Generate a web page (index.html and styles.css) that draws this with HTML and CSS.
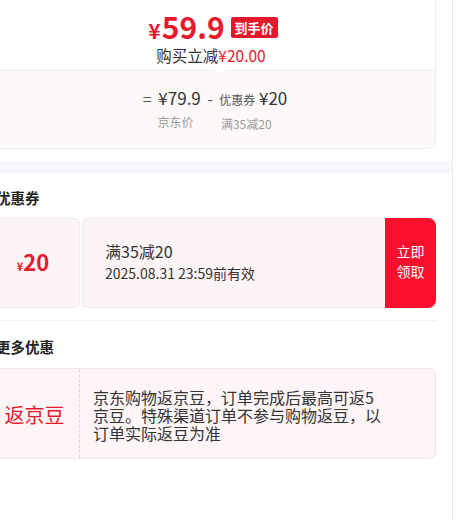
FILE: index.html
```html
<!DOCTYPE html>
<html lang="zh-CN">
<head>
<meta charset="utf-8">
<link rel="stylesheet" href="styles.css">
</head>
<body>
<div class="page">
  <div class="panel">
    <div class="inner">
      <div class="price-card">
        <div class="pc-top">
          <div class="final"><span class="yen">¥</span><span class="num">59.9</span><span class="badge">到手价</span></div>
          <div class="save">购买立减<span class="red">¥20.00</span></div>
        </div>
        <div class="pc-bottom">
          <span class="op">=</span>
          <div class="col">
            <div class="val">¥79.9</div>
            <div class="lbl">京东价</div>
          </div>
          <span class="op">-</span>
          <div class="col">
            <div class="val"><span class="vsm">优惠券</span> ¥20</div>
            <div class="lbl">满35减20</div>
          </div>
        </div>
      </div>
      <div class="band"></div>
      <section class="sec sec-coupon">
        <h3 class="title">优惠券</h3>
        <div class="coupon">
          <div class="stub"><span class="cy">¥</span><span class="camt">20</span></div>
          <div class="cmain">
            <div class="cname">满35减20</div>
            <div class="cdate">2025.08.31 23:59前有效</div>
          </div>
          <div class="cbtn">立即<br>领取</div>
        </div>
      </section>
      <section class="sec sec-more">
        <h3 class="title">更多优惠</h3>
        <div class="bean">
          <div class="bean-tag">返京豆</div>
          <div class="bean-text">京东购物返京豆，订单完成后最高可返5京豆。特殊渠道订单不参与购物返豆，以订单实际返豆为准</div>
        </div>
      </section>
    </div>
  </div>
  <div class="rail"></div>
</div>
</body>
</html>
```
FILE: styles.css
```css
* { box-sizing: border-box; }
html, body { margin: 0; padding: 0; background: #fff; }
body {
  font-family: "Noto Sans CJK SC", "Noto Sans", sans-serif;
  color: #333;
  width: 458px;
  height: 520px;
  overflow: hidden;
}
.page { display: flex; height: 520px; }
.panel {
  width: 453px;
  height: 520px;
  overflow: hidden;
  border-right: 1px solid #e9e9ec;
}
.rail { flex: 1; background: #fff; }
.inner {
  width: 482px;
  margin-left: -30px;
}
.price-card {
  margin: -8px 16px 0 16px;
  border: 1px solid #ececec;
  border-radius: 8px;
  overflow: hidden;
  position: relative;
}
.pc-top {
  height: 78px;
  padding-top: 15px;
  display: flex;
  flex-direction: column;
  align-items: center;
  background: #fff;
  border-bottom: 1px solid #f3eded;
  position: relative;
}
.pc-top::after {
  content: "";
  position: absolute;
  left: 228px;
  bottom: -1px;
  width: 0;
  height: 0;
  border-left: 5px solid transparent;
  border-right: 5px solid transparent;
  border-bottom: 5px solid #fff;
}
.final {
  height: 34px;
  display: flex;
  align-items: baseline;
  color: #e8192c;
  line-height: 34px;
  margin-left: 4px;
  margin-top: 1px;
}
.yen { font-size: 21px; font-weight: 700; margin-right: 1px; }
.num { font-size: 30px; font-weight: 700; }
.badge {
  align-self: center;
  margin-left: 6px;
  margin-top: 2px;
  background: #e5172b;
  color: #fff;
  font-size: 13px;
  font-weight: 700;
  line-height: 21px;
  height: 21px;
  padding: 0 4px;
  border-radius: 2px;
}
.save { font-size: 15.5px; line-height: 20px; color: #333; margin-top: 2px; }
.red { color: #e8192c; }
.pc-bottom {
  height: 77px;
  background: #fdf9f9;
  padding-top: 15px;
  padding-left: 8px;
  display: flex;
  justify-content: center;
  align-items: flex-start;
  gap: 6px;
}
.op { font-size: 16px; line-height: 24px; color: #555; }
.col { display: flex; flex-direction: column; align-items: center; }
.val { font-size: 17px; line-height: 24px; color: #333; }
.vsm { font-size: 12px; color: #555; }
.lbl { font-size: 12px; line-height: 18px; color: #999; margin-top: 3px; }
.col:nth-of-type(1) .lbl { margin-right: 8px; }
.col:nth-of-type(2) .lbl { margin-right: 14px; }
.band {
  height: 12px;
  margin-top: 12px;
  background: #f6f7fb;
}
.sec { padding: 0 16px; }
.sec-coupon { padding-top: 15px; }
.sec-coupon::after {
  content: "";
  display: block;
  height: 1px;
  background: #f1f1f1;
  margin-top: 12px;
}
.sec-more { padding-top: 16px; }
.title {
  margin: 0 0 10px 10px;
  font-size: 14.5px;
  line-height: 20px;
  font-weight: 700;
  color: #222;
}
.sec-more .title { margin-bottom: 11px; }
.coupon {
  display: flex;
  height: 90px;
}
.stub {
  width: 94px;
  background: #fdf4f5;
  border: 1px solid #f6e7e9;
  border-radius: 6px;
  display: flex;
  align-items: baseline;
  justify-content: center;
  padding-top: 27px;
  color: #e8192c;
}
.cy { font-size: 11px; font-weight: 700; }
.camt { font-size: 22px; font-weight: 700; line-height: 30px; }
.cmain {
  flex: 1;
  margin-left: 2px;
  background: #fdf4f5;
  border: 1px solid #f6e7e9;
  border-right: none;
  border-radius: 6px 0 0 6px;
  padding-left: 22px;
  padding-bottom: 2px;
  display: flex;
  flex-direction: column;
  justify-content: center;
}
.cname { font-size: 16px; line-height: 22px; color: #333; }
.cdate { font-size: 14px; line-height: 23px; color: #333; }
.cbtn {
  width: 51px;
  background: #fb0f2d;
  color: #fff;
  border-radius: 0 8px 8px 0;
  font-size: 14px;
  line-height: 20px;
  display: flex;
  align-items: center;
  justify-content: center;
  text-align: center;
  padding-bottom: 4px;
}
.bean {
  display: flex;
  height: 91px;
  background: #fdf5f6;
  border: 1px solid #f3e3e6;
  border-radius: 6px;
}
.bean-tag {
  width: 93px;
  border-right: 1px dashed #e6cfd3;
  display: flex;
  align-items: center;
  justify-content: center;
  font-size: 20px;
  color: #e8192c;
  padding-top: 2px;
  padding-left: 3px;
}
.bean-text {
  width: 305px;
  padding-left: 13px;
  font-size: 16px;
  line-height: 18px;
  color: #333;
  display: flex;
  align-items: center;
  padding-top: 2px;
}
```
